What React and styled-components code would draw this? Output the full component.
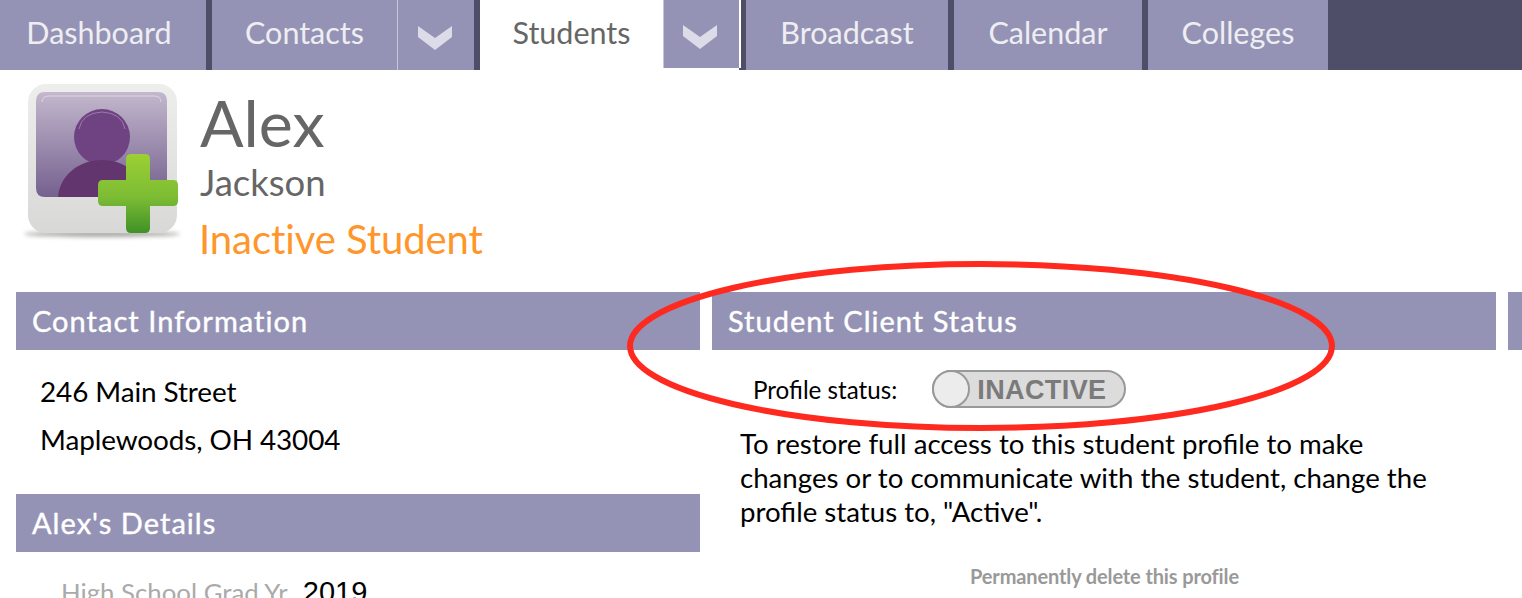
import React from "react";
import styled, { createGlobalStyle } from "styled-components";

const Global = createGlobalStyle`
  html, body { margin: 0; padding: 0; background: #fff; overflow: hidden; }
  body { font-family: Lato, "Liberation Sans", sans-serif; color: #000; }
`;
const Page = styled.div`
  position: relative;
  width: 1522px;
  height: 598px;
  overflow: hidden;
`;
const Nav = styled.nav`
  display: flex;
  height: 70px;
  background: #4f4e68;
`;
const Tab = styled.div`
  width: ${(p) => p.$w}px;
  margin-right: ${(p) => p.$gap ?? 6}px;
  height: 70px;
  box-sizing: border-box;
  display: flex;
  align-items: center;
  justify-content: center;
  padding: 0 ${(p) => p.$inset ?? 0}px 6px 0;
  font-size: 30.5px;
  background: ${(p) => (p.$active ? "#fff" : "#9593b5")};
  color: ${(p) => (p.$active ? "#666" : "#eeeef2")};
`;
const ChevronTab = styled.div`
  width: ${(p) => p.$w}px;
  height: ${(p) => (p.$short ? 68 : 70)}px;
  margin-right: ${(p) => p.$gap ?? 6}px;
  display: flex;
  align-items: center;
  justify-content: center;
  background: #9593b5;
  box-shadow: ${(p) => (p.$short ? "2px 0 0 #fff, 0 2px 0 #fff" : "none")};
  border-left: 1px solid #c8c8d2;
  box-sizing: border-box;
  padding: 6px 3px 0 0;
`;
const Hero = styled.header`
  display: flex;
  height: 222px;
  padding: 14px 0 0 22px;
  box-sizing: border-box;
  gap: 16px;
`;
const Names = styled.div`
  display: flex;
  flex-direction: column;
  color: #666;
`;
const First = styled.div`
  font-size: 64.5px;
  line-height: 78px;
  margin-top: -1px;
`;
const Last = styled.div`
  font-size: 36.5px;
  line-height: 44px;
  margin-top: -1px;
`;
const Status = styled.div`
  font-size: 40px;
  line-height: 50px;
  margin: 10px 0 0 -1px;
  color: #ff962b;
  letter-spacing: -0.07px;
`;
const Columns = styled.div`
  display: flex;
  gap: 12px;
  padding-left: 16px;
`;
const Column = styled.section`
  flex: none;
  width: ${(p) => p.$w}px;
`;
const Bar = styled.h2`
  margin: 0;
  height: 58px;
  padding: 0 0 2px 16px;
  box-sizing: border-box;
  display: flex;
  align-items: center;
  background: #9593b5;
  color: #fff;
  font-size: 29px;
  font-weight: 400;
  letter-spacing: 1.03px;
  -webkit-text-stroke: 0.4px #fff;
`;
const Address = styled.div`
  padding: 17px 0 0 24px;
  height: 144px;
  box-sizing: border-box;
  font-size: 27.9px;
  line-height: 48px;
  letter-spacing: -0.1px;
`;
const Detail = styled.div`
  display: flex;
  gap: 10px;
  padding: 24px 0 0 45px;
  font-size: 25.8px;
  line-height: 32px;
`;
const DetailLabel = styled.span`
  color: #aaa;
`;
const DetailValue = styled.span`
  font-family: "Liberation Sans", sans-serif;
  font-size: 29px;
`;
const StatusRow = styled.div`
  display: flex;
  align-items: center;
  height: 38px;
  margin-top: 20px;
  padding-left: 41px;
  gap: 35px;
  font-size: 24.2px;
`;
const Toggle = styled.div`
  width: 194px;
  height: 38px;
  box-sizing: border-box;
  position: relative;
  display: flex;
  align-items: center;
  padding: 3px 0 0 43px;
  border: 2px solid #999;
  border-radius: 19px;
  background: #dcdcdc;
  font-family: "Liberation Sans", sans-serif;
  font-weight: 700;
  font-size: 27px;
  letter-spacing: 0.4px;
  color: #7a7a7a;
`;
const Knob = styled.span`
  position: absolute;
  left: -2px;
  top: -2px;
  width: 38px;
  height: 38px;
  box-sizing: border-box;
  border: 2px solid #999;
  border-radius: 50%;
  background: #ececec;
`;
const Paragraph = styled.p`
  margin: 19px 0 0 28px;
  width: 720px;
  font-size: 27.65px;
  line-height: 34px;
`;
const DeleteLink = styled.div`
  margin: 35px 0 0 258px;
  font-size: 20px;
  font-weight: 700;
  line-height: 24px;
  letter-spacing: -0.13px;
  color: #999;
`;
const Annotation = styled.svg`
  position: absolute;
  left: 0;
  top: 0;
  pointer-events: none;
`;

const Chevron = () => (
  <svg width="36" height="26" viewBox="0 0 36 26">
    <path d="M1 1 L18 13 L35 1 V12 L18 25 L1 12 Z" fill="#dcdbe8" />
  </svg>
);

const Avatar = () => (
  <svg width="162" height="158" viewBox="0 0 162 158" style={{ flex: "none" }}>
    <defs>
      <linearGradient id="scr" x1="0" y1="0" x2="0" y2="1">
        <stop offset="0" stopColor="#c3b8cd" />
        <stop offset="1" stopColor="#75608f" />
      </linearGradient>
      <linearGradient id="card" x1="0" y1="0" x2="0" y2="1">
        <stop offset="0" stopColor="#eeeeed" />
        <stop offset="1" stopColor="#d8d8d6" />
      </linearGradient>
      <linearGradient id="plus" x1="0" y1="0" x2="0" y2="1">
        <stop offset="0" stopColor="#9ccf33" />
        <stop offset="0.55" stopColor="#7cbc34" />
        <stop offset="1" stopColor="#3f9127" />
      </linearGradient>
      <filter id="blur" x="-20%" y="-200%" width="140%" height="500%">
        <feGaussianBlur stdDeviation="2" />
      </filter>
    </defs>
    <ellipse cx="80" cy="150" rx="78" ry="3" fill="#a8a8a4" filter="url(#blur)" />
    <rect x="6" y="0" width="149" height="149" rx="18" fill="url(#card)" />
    <path d="M14 17 Q14 8 23 8 H136 Q145 8 145 17 V113 H23 Q14 113 14 104 Z" fill="url(#scr)" />
    <path d="M20 18 Q20 12 27 12 H132 Q139 12 139 18" fill="none" stroke="#dcd6e2" strokeWidth="1" />
    <circle cx="80" cy="53" r="28" fill="#6f4382" />
    <path d="M57 45 Q60 29 80 28 Q100 29 103 45" fill="none" stroke="#9a7cab" strokeWidth="1" />
    <path d="M36 113 C38 90 58 76 80 76 C102 76 122 90 124 113 Z" fill="#62356f" />
    <path
      d="M104 75 Q104 70 109 70 H123 Q128 70 128 75 V96 H151 Q156 96 156 101 V117 Q156 122 151 122 H128 V144 Q128 149 123 149 H109 Q104 149 104 144 V122 H81 Q76 122 76 117 V101 Q76 96 81 96 H104 Z"
      fill="url(#plus)"
    />
  </svg>
);

export default function App() {
  return (
    <Page>
      <Global />
      <Nav>
        <Tab $w={206} $inset={8}>Dashboard</Tab>
        <Tab $w={185} $gap={0}>Contacts</Tab>
        <ChevronTab $w={77}><Chevron /></ChevronTab>
        <Tab $w={183} $active $gap={0}>Students</Tab>
        <ChevronTab $w={76} $short $gap={7}><Chevron /></ChevronTab>
        <Tab $w={202}>Broadcast</Tab>
        <Tab $w={188}>Calendar</Tab>
        <Tab $w={180} $gap={0}>Colleges</Tab>
      </Nav>
      <Hero>
        <Avatar />
        <Names>
          <First>Alex</First>
          <Last>Jackson</Last>
          <Status>Inactive Student</Status>
        </Names>
      </Hero>
      <Columns>
        <Column $w={684}>
          <Bar>Contact Information</Bar>
          <Address>
            246 Main Street
            <br />
            Maplewoods, OH 43004
          </Address>
          <Bar>Alex's Details</Bar>
          <Detail>
            <DetailLabel>High School Grad Yr.</DetailLabel>
            <DetailValue>2019</DetailValue>
          </Detail>
        </Column>
        <Column $w={784}>
          <Bar>Student Client Status</Bar>
          <StatusRow>
            Profile status:
            <Toggle>
              <Knob />
              INACTIVE
            </Toggle>
          </StatusRow>
          <Paragraph>
            To restore full access to this student profile to make changes or to communicate with the student, change the profile status to, "Active".
          </Paragraph>
          <DeleteLink>Permanently delete this profile</DeleteLink>
        </Column>
        <Column $w={14}>
          <Bar />
        </Column>
      </Columns>
      <Annotation width="1522" height="598" viewBox="0 0 1522 598">
        <ellipse cx="981" cy="346" rx="351" ry="82" fill="none" stroke="#ff2a1f" strokeWidth="6" />
      </Annotation>
    </Page>
  );
}
